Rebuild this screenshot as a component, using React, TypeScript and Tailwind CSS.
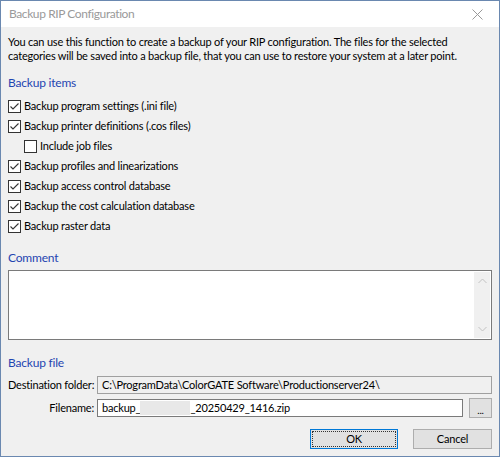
import React from "react";

const font = { fontFamily: 'Lato, "Noto Sans", sans-serif' };

const CheckBox = ({ checked }: { checked: boolean }) => (
  <span className="w-[13px] h-[13px] border border-[#333333] bg-white flex items-center justify-center shrink-0">
    {checked && (
      <svg width="11" height="11" viewBox="0 0 11 11">
        <path d="M1.5 5.5 L4 8 L9.5 2.5" fill="none" stroke="#333333" strokeWidth="1.1" />
      </svg>
    )}
  </span>
);

const Item = ({ label, checked = true, indent = false }: { label: string; checked?: boolean; indent?: boolean }) => (
  <div className={`h-[20px] flex items-center gap-[3px] ${indent ? "pl-[16px]" : ""}`}>
    <CheckBox checked={checked} />
    <span>{label}</span>
  </div>
);

const items = [
  { label: "Backup program settings (.ini file)" },
  { label: "Backup printer definitions (.cos files)" },
  { label: "Include job files", checked: false, indent: true },
  { label: "Backup profiles and linearizations" },
  { label: "Backup access control database" },
  { label: "Backup the cost calculation database" },
  { label: "Backup raster data" },
];

export default function App() {
  return (
    <div
      style={font}
      className="w-[500px] h-[457px] border border-[#6a88b0] bg-[#f0f0f0] flex flex-col text-[11px] tracking-[-0.2px] text-black overflow-hidden whitespace-nowrap"
    >
      <div className="h-[26px] bg-white flex items-center justify-between pl-[8px] pr-[16px] shrink-0">
        <span className="text-[#9a9a9a] text-[12px] tracking-[-0.4px]">Backup RIP Configuration</span>
        <svg width="11" height="11" viewBox="0 0 11 11">
          <path d="M0.5 0.5 L10.5 10.5 M10.5 0.5 L0.5 10.5" stroke="#999999" strokeWidth="1" />
        </svg>
      </div>

      <div className="flex flex-col px-[7px] pt-[8px]">
        <p className="leading-[14px]">
          You can use this function to create a backup of your RIP configuration. The files for the selected
          <br />
          categories will be saved into a backup file, that you can use to restore your system at a later point.
        </p>

        <h2 className="text-[12px] tracking-[-0.2px] leading-[16px] text-[#1f45b0] mt-[12px]">Backup items</h2>
        <div className="flex flex-col mt-[5px]">
          {items.map((it) => (
            <Item key={it.label} {...it} />
          ))}
        </div>

        <h2 className="text-[12px] tracking-[-0.2px] leading-[16px] text-[#1f45b0] mt-[14px]">Comment</h2>
        <div className="mt-[4px] h-[70px] border border-[#7a7a7a] bg-white flex justify-end">
          <div className="w-[16px] bg-[#f0f0f0] flex flex-col items-center justify-between py-[6px] my-[1px] mr-[1px]">
            <svg width="9" height="6" viewBox="0 0 9 6">
              <path d="M0.5 5 L4.5 1 L8.5 5" fill="none" stroke="#c2c2c2" strokeWidth="1" />
            </svg>
            <svg width="9" height="6" viewBox="0 0 9 6">
              <path d="M0.5 1 L4.5 5 L8.5 1" fill="none" stroke="#c2c2c2" strokeWidth="1" />
            </svg>
          </div>
        </div>

        <h2 className="text-[12px] tracking-[-0.2px] leading-[16px] text-[#1f45b0] mt-[15px]">Backup file</h2>
        <div className="mt-[5px] flex items-center gap-[3px]">
          <span className="w-[86px] text-right shrink-0">Destination folder:</span>
          <div className="flex-1 h-[18px] border border-[#a0a0a0] bg-[#f0f0f0] flex items-center px-[4px]">
            C:\ProgramData\ColorGATE Software\Productionserver24\
          </div>
        </div>
        <div className="mt-[4px] flex items-center gap-[3px]">
          <span className="w-[86px] text-right shrink-0">Filename:</span>
          <div className="flex-1 h-[18px] border border-[#7a7a7a] bg-white flex items-center px-[4px]">
            <span>backup_</span>
            <span className="w-[50px] h-[14px] bg-[#e8e8e8]" />
            <span>_20250429_1416.zip</span>
          </div>
          <button className="ml-[3px] w-[23px] h-[20px] border border-[#adadad] bg-[#e1e1e1] text-[10px] leading-none pt-[3px]">
            ...
          </button>
        </div>

        <div className="mt-[11px] flex justify-end gap-[15px]">
          <button className="w-[88px] h-[20px] border border-[#0078d7] bg-[#e1e1e1] p-[1px]">
            <span className="w-full h-full border border-dotted border-[#333333] flex items-center justify-center">
              OK
            </span>
          </button>
          <button className="w-[79px] h-[20px] border border-[#adadad] bg-[#e1e1e1] flex items-center justify-center">
            Cancel
          </button>
        </div>
      </div>
    </div>
  );
}
